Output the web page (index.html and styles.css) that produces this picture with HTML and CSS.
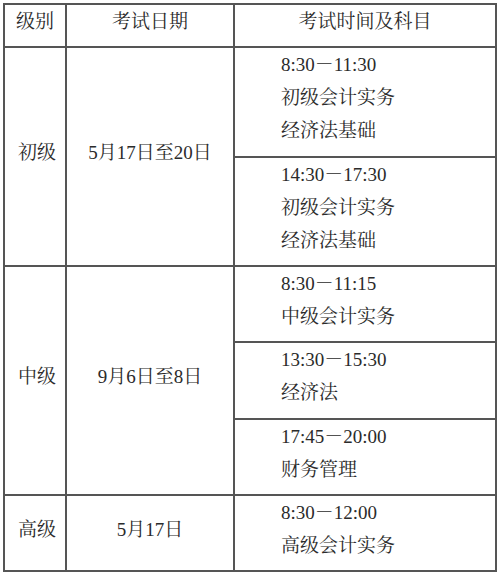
FILE: index.html
```html
<!DOCTYPE html>
<html lang="zh-CN">
<head>
<meta charset="utf-8">
<title>考试时间安排</title>
<link rel="stylesheet" href="styles.css">
</head>
<body>
<table class="schedule">
  <colgroup>
    <col class="c-level">
    <col class="c-date">
    <col class="c-time">
  </colgroup>
  <thead>
    <tr class="r-head">
      <th>级别</th>
      <th>考试日期</th>
      <th>考试时间及科目</th>
    </tr>
  </thead>
  <tbody>
    <tr class="r-110">
      <td class="level" rowspan="2">初级</td>
      <td class="date" rowspan="2">5月17日至20日</td>
      <td class="slot">8:30－11:30<br>初级会计实务<br>经济法基础</td>
    </tr>
    <tr class="r-109">
      <td class="slot">14:30－17:30<br>初级会计实务<br>经济法基础</td>
    </tr>
    <tr class="r-76">
      <td class="level" rowspan="3">中级</td>
      <td class="date" rowspan="3">9月6日至8日</td>
      <td class="slot">8:30－11:15<br>中级会计实务</td>
    </tr>
    <tr class="r-77">
      <td class="slot">13:30－15:30<br>经济法</td>
    </tr>
    <tr class="r-76">
      <td class="slot">17:45－20:00<br>财务管理</td>
    </tr>
    <tr class="r-76">
      <td class="level">高级</td>
      <td class="date">5月17日</td>
      <td class="slot">8:30－12:00<br>高级会计实务</td>
    </tr>
  </tbody>
</table>
</body>
</html>
```
FILE: styles.css
```css
html, body {
  background: #ffffff;
}
body {
  margin: 3px 0 0 3px;
  font-family: "Liberation Serif", "Noto Serif CJK SC", "Noto Sans CJK SC", serif;
  font-size: 19px;
  color: #2b2b2b;
}
.schedule {
  border-collapse: collapse;
  table-layout: fixed;
  width: 492px;
}
.c-level { width: 62px; }
.c-date { width: 168px; }
.c-time { width: 262px; }
.schedule th,
.schedule td {
  border: 2px solid #555555;
  padding: 0;
  line-height: 33px;
}
.schedule th {
  font-weight: normal;
  text-align: center;
  vertical-align: top;
}
.r-head { height: 43px; }
.r-110 { height: 110px; }
.r-109 { height: 109px; }
.r-76 { height: 76px; }
.r-77 { height: 77px; }
.schedule .level,
.schedule .date {
  text-align: center;
  vertical-align: middle;
  padding-bottom: 8px;
}
.schedule .level {
  padding-left: 4px;
}
.schedule .slot {
  vertical-align: top;
  text-align: left;
  padding-left: 46px;
}
```
